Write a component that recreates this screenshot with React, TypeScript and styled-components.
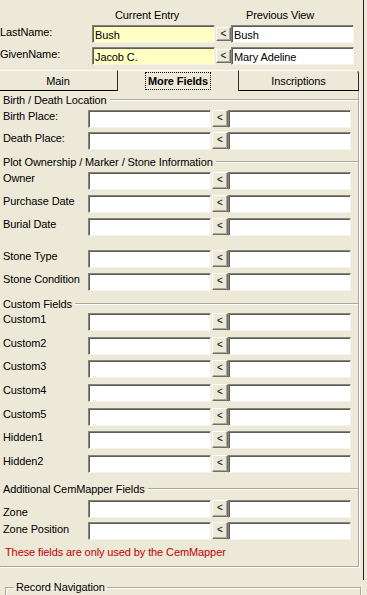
import styled, { createGlobalStyle } from "styled-components";

type Row = { label: string; extra?: number; pad?: number };

const birthRows: Row[] = [{ label: "Birth Place:" }, { label: "Death Place:" }];

const plotRows: Row[] = [
  { label: "Owner" },
  { label: "Purchase Date" },
  { label: "Burial Date" },
  { label: "Stone Type", extra: 9 },
  { label: "Stone Condition" },
];

const customRows: Row[] = [
  { label: "Custom1" },
  { label: "Custom2" },
  { label: "Custom3" },
  { label: "Custom4" },
  { label: "Custom5" },
  { label: "Hidden1" },
  { label: "Hidden2" },
];

const mapperRows: Row[] = [
  { label: "Zone", pad: 6 },
  { label: "Zone Position", pad: 1 },
];

type GroupProps = {
  title: string;
  rows: Row[];
  top: number;
  headGap: number;
  gap: number;
};

const FieldGroup = ({ title, rows, top, headGap, gap }: GroupProps) => (
  <Group $top={top}>
    <GroupHead $gap={headGap}>
      <GroupTitle>{title}</GroupTitle>
      <EtchedLine />
    </GroupHead>
    <Rows $gap={gap}>
      {rows.map((r) => (
        <Field key={r.label} $extra={r.extra ?? 0}>
          <FieldLabel $pad={r.pad ?? 0}>{r.label}</FieldLabel>
          <TextBox readOnly defaultValue="" />
          <CopyButton type="button">&lt;</CopyButton>
          <TextBox readOnly defaultValue="" />
        </Field>
      ))}
    </Rows>
  </Group>
);

const App = () => {
  return (
    <Window>
      <GlobalStyle />
      <Main>
        <HeadRow>
          <HeadTitle $w={131}>Current Entry</HeadTitle>
          <HeadTitle $w={100}>Previous View</HeadTitle>
        </HeadRow>

        <NameRows>
          <NameRow>
            <NameLabel>LastName:</NameLabel>
            <TextBox $yellow readOnly defaultValue="Bush" />
            <CopyButton $small type="button">&lt;</CopyButton>
            <TextBox readOnly defaultValue="Bush" />
          </NameRow>
          <NameRow>
            <NameLabel>GivenName:</NameLabel>
            <TextBox $yellow readOnly defaultValue="Jacob C." />
            <CopyButton $small type="button">&lt;</CopyButton>
            <TextBox readOnly defaultValue="Mary Adeline" />
          </NameRow>
        </NameRows>

        <TabStrip>
          <Tab $w={119} $first>
            Main
          </Tab>
          <Tab $w={120} $active>
            <Focus>More Fields</Focus>
          </Tab>
          <Tab $w={121} $last>
            Inscriptions
          </Tab>
        </TabStrip>

        <PanelBody>
          <FieldGroup title="Birth / Death Location" rows={birthRows} top={2} headGap={3} gap={4} />
          <FieldGroup
            title="Plot Ownership / Marker / Stone Information"
            rows={plotRows}
            top={5}
            headGap={3}
            gap={5}
          />
          <FieldGroup title="Custom Fields" rows={customRows} top={6} headGap={2} gap={5.67} />
          <FieldGroup title="Additional CemMapper Fields" rows={mapperRows} top={9} headGap={4} gap={4} />
          <Note>These fields are only used by the CemMapper</Note>
        </PanelBody>
      </Main>

      <NavFrame>
        <NavLegend>Record Navigation</NavLegend>
      </NavFrame>
    </Window>
  );
};

export default App;

const GlobalStyle = createGlobalStyle`
  html, body {
    margin: 0;
    padding: 0;
    background: #ece9d8;
  }

  body {
    font-family: "Liberation Sans", Arial, sans-serif;
    font-size: 11px;
    letter-spacing: -0.1px;
    color: #000;
  }
`;

const Window = styled.div`
  width: 367px;
  height: 595px;
  overflow: hidden;
  background: #ece9d8;
`;

const Main = styled.div`
  box-sizing: border-box;
  width: 364px;
  height: 580px;
  border-right: 1px solid #1e1e1e;
  display: flex;
  flex-direction: column;
  padding-top: 9px;
`;

const HeadRow = styled.div`
  display: flex;
  height: 13px;
  line-height: 13px;
  padding-left: 115px;
`;

const HeadTitle = styled.span<{ $w: number }>`
  width: ${(p) => p.$w}px;
  white-space: nowrap;
`;

const NameRows = styled.div`
  display: flex;
  flex-direction: column;
  gap: 4px;
  margin-top: 3px;
`;

const NameRow = styled.div`
  display: flex;
  align-items: center;
  height: 18px;
`;

const NameLabel = styled.span`
  width: 92px;
  align-self: flex-start;
  line-height: 13px;
  padding-top: 1px;
  white-space: nowrap;
`;

const TextBox = styled.input<{ $yellow?: boolean }>`
  box-sizing: border-box;
  width: 123px;
  height: 18px;
  margin: 0;
  padding: 1px 2px 0;
  font: 11px "Liberation Sans", Arial, sans-serif;
  letter-spacing: -0.1px;
  color: #000;
  background: ${(p) => (p.$yellow ? "#ffffc4" : "#ffffff")};
  border: 1px solid;
  border-color: #858478 #f4f3ee #f4f3ee #858478;
  box-shadow: inset 1px 1px 0 #5d5c55;
  outline: none;
`;

const CopyButton = styled.button<{ $small?: boolean }>`
  box-sizing: border-box;
  width: ${(p) => (p.$small ? 15 : 16)}px;
  height: ${(p) => (p.$small ? 14 : 17)}px;
  margin: 0 0 0 1px;
  padding: 0 0 1px;
  align-self: ${(p) => (p.$small ? "center" : "flex-start")};
  font: 10px "Liberation Sans", Arial, sans-serif;
  line-height: 12px;
  color: #000;
  background: #ece9d8;
  border: 1px solid;
  border-color: #ffffff #716f64 #716f64 #ffffff;
  box-shadow: inset -1px -1px 0 #aca899;
`;

const TabStrip = styled.div`
  display: flex;
  height: 21px;
  margin-top: 5px;
  margin-left: -1px;
`;

const Tab = styled.div<{ $w: number; $active?: boolean; $first?: boolean; $last?: boolean }>`
  box-sizing: border-box;
  width: ${(p) => p.$w}px;
  display: flex;
  align-items: center;
  justify-content: center;
  border-top: 1px solid #ffffff;
  border-bottom: ${(p) => (p.$active ? "1px solid transparent" : "1px solid #000")};
  border-left: ${(p) => (p.$last ? "1px solid #2b2b2b" : "none")};
  border-right: ${(p) => (p.$first || p.$last ? "1px solid #2b2b2b" : "none")};
  border-top-right-radius: ${(p) => (p.$last ? "4px" : "0")};
  border-top-left-radius: ${(p) => (p.$first ? "3px" : "0")};
  font-weight: ${(p) => (p.$active ? 700 : 400)};
  padding-top: 1px;
  white-space: nowrap;
`;

const Focus = styled.span`
  outline: 1px dotted #000;
  outline-offset: 0;
  padding: 2px 2px 1px;
  line-height: 13px;
`;

const PanelBody = styled.div`
  box-sizing: border-box;
  width: 359px;
  height: 476px;
  display: flex;
  flex-direction: column;
  border-right: 1px solid #aca899;
  border-bottom: 1px solid #aca899;
  box-shadow: 1px 1px 0 #ffffff;
`;

const Group = styled.section<{ $top: number }>`
  display: flex;
  flex-direction: column;
  margin-top: ${(p) => p.$top}px;
`;

const GroupHead = styled.div<{ $gap: number }>`
  display: flex;
  align-items: center;
  height: 14px;
  margin-bottom: ${(p) => p.$gap}px;
  padding-left: 3px;
`;

const GroupTitle = styled.span`
  line-height: 14px;
  white-space: nowrap;
`;

const EtchedLine = styled.div`
  flex: 1;
  height: 0;
  margin-left: 3px;
  border-top: 1px solid #aca899;
  border-bottom: 1px solid #ffffff;
`;

const Rows = styled.div<{ $gap: number }>`
  display: flex;
  flex-direction: column;
  gap: ${(p) => p.$gap}px;
`;

const Field = styled.div<{ $extra: number }>`
  display: flex;
  align-items: center;
  height: 18px;
  margin-top: ${(p) => p.$extra}px;
`;

const FieldLabel = styled.span<{ $pad: number }>`
  box-sizing: border-box;
  width: 88px;
  align-self: flex-start;
  padding-left: 3px;
  padding-top: ${(p) => p.$pad}px;
  line-height: 13px;
  white-space: nowrap;
`;

const Note = styled.div`
  margin-top: 5px;
  padding-left: 5px;
  line-height: 14px;
  color: #c00000;
`;

const NavFrame = styled.fieldset`
  box-sizing: border-box;
  width: 356px;
  height: 40px;
  margin: 1px 0 0 5px;
  padding: 0 8px;
  border: 1px solid #aca899;
  box-shadow: inset 1px 1px 0 #ffffff, 1px 1px 0 #ffffff;
`;

const NavLegend = styled.legend`
  padding: 0 2px;
  line-height: 13px;
`;
